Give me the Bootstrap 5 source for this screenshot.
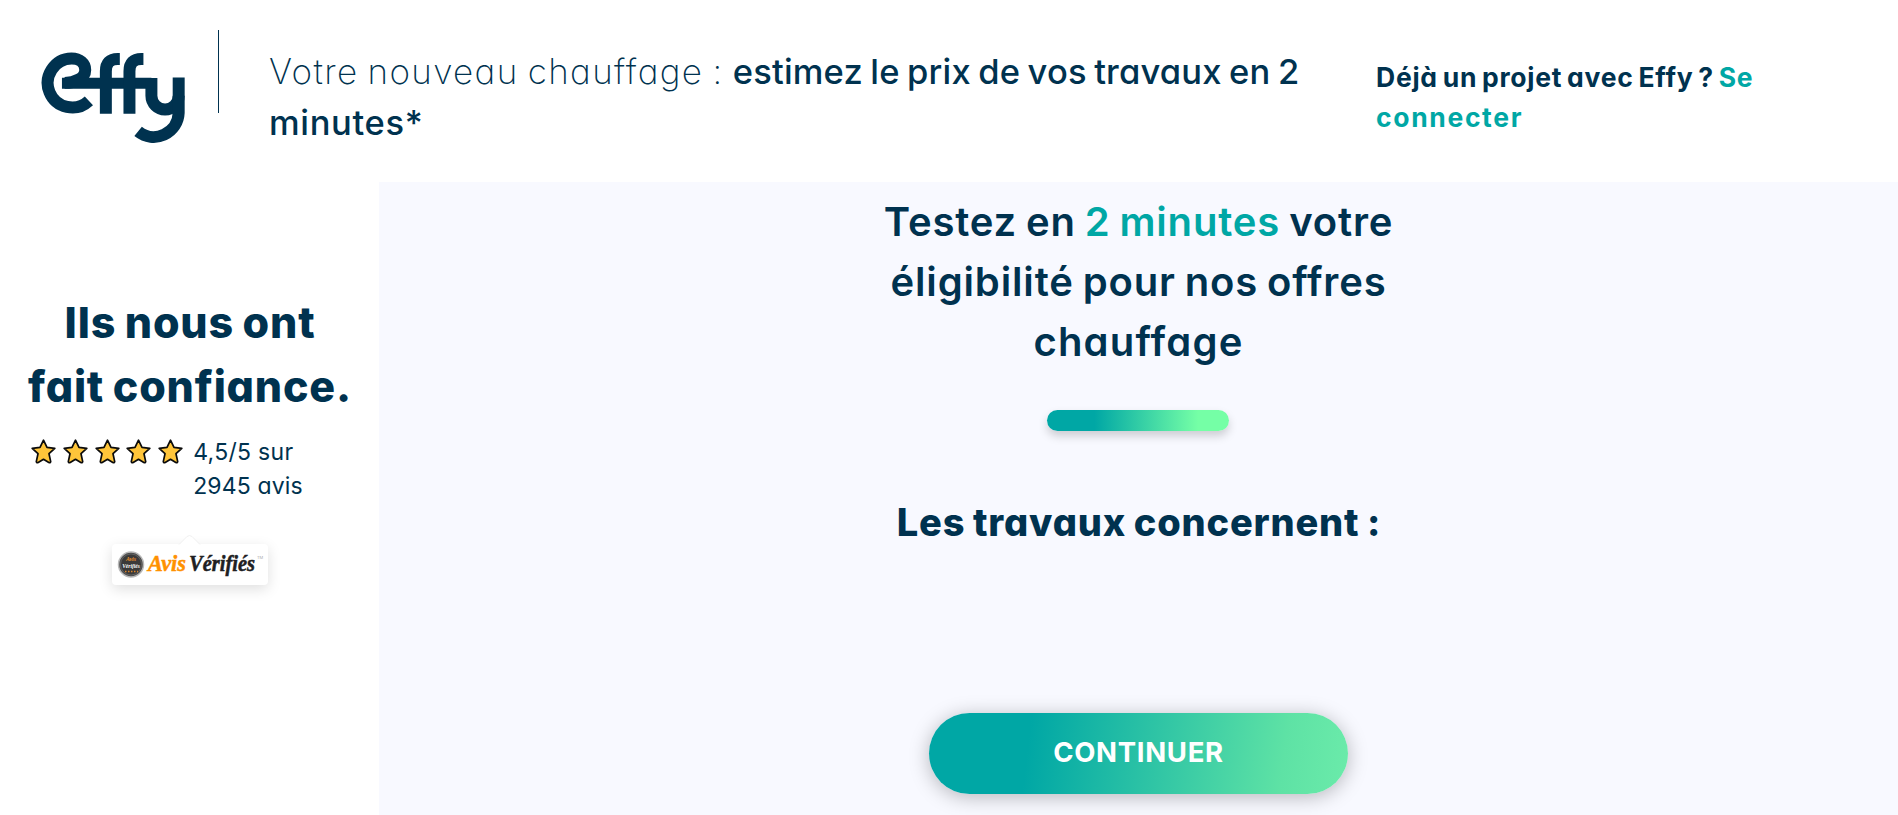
<!DOCTYPE html>
<html lang="fr">
<head>
  <meta charset="UTF-8">
  <title>Effy - Votre nouveau chauffage</title>
  <meta name="viewport" content="width=device-width, initial-scale=1">
  <link href="https://cdn.jsdelivr.net/npm/bootstrap@5.3.0/dist/css/bootstrap.min.css" rel="stylesheet">
  <style>
    body {
      font-family: Inter, "Liberation Sans", sans-serif;
      font-feature-settings: "cv11" 1;
      color: #00324f;
    }
    a, .teal { color: #00a7a5; text-decoration: none; }

    /* header */
    .site-header { height: 182px; padding-left: 41px; }
    .logo { width: 144px; height: 92px; margin-top: 51.5px; }
    .separator { width: 1px; height: 83px; margin: 30px 50px 0 33px; background: #00324f; }
    .site-title {
      width: 1060px;
      margin: 46px 0 0;
      font-size: 34.5px;
      font-weight: 500;
      line-height: 51px;
      white-space: nowrap;
      word-spacing: -2px;
    }
    .title-thin { font-size: 35px; font-weight: 200; letter-spacing: 1.35px; }
    .title-strong { letter-spacing: .19px; }
    .title-last { letter-spacing: .65px; }
    .login {
      margin: 57px 0 0 47px;
      font-size: 26.5px;
      font-weight: 700;
      line-height: 40px;
      letter-spacing: .75px;
      word-spacing: -2.2px;
    }
    .login a.wide { letter-spacing: 1.65px; }

    /* reviews column */
    .reviews { width: 379px; padding-top: 108px; }
    .reviews h2 {
      font-size: 43px;
      font-weight: 800;
      line-height: 64px;
      letter-spacing: .8px;
      word-spacing: -1.5px;
      padding-left: 1px;
      margin-bottom: 17px;
    }
    .stars { gap: 6.8px; padding: 4px 10px 0 31px; }
    .stars svg { width: 25px; height: 25px; }
    .rating p { font-size: 23px; line-height: 34px; letter-spacing: .3px; }
    .rating p + p { letter-spacing: .15px; }
    .avis-box {
      width: 156px;
      height: 41px;
      margin: 41px 0 0 112px;
      border-radius: 4px;
      box-shadow: 0 4px 14px rgba(0, 0, 0, .13);
      background: #fff;
    }
    .avis-box svg { width: 156px; height: 50px; margin-top: -9px; overflow: visible; }

    /* form */
    .simulator { background: #f8f9ff; padding-top: 10px; }
    .simulator h1 {
      font-size: 40px;
      font-weight: 600;
      line-height: 60px;
      letter-spacing: .85px;
      word-spacing: -2px;
      margin-bottom: 38px;
    }
    .simulator h1 .last { letter-spacing: 1.2px; }
    .bar {
      width: 182px;
      height: 21px;
      margin-right: 1px;
      border-radius: 11px;
      background: linear-gradient(90deg, #00a7a5 26%, #75ffa6 83%);
      box-shadow: 0 5px 10px rgba(0, 0, 0, .18);
    }
    .simulator h3 {
      font-size: 38px;
      font-weight: 800;
      line-height: 56px;
      letter-spacing: .82px;
      word-spacing: -1.5px;
      padding-left: 1px;
      margin: 63px 0 163px;
    }
    .btn-continue, .btn-continue:hover {
      width: 419px;
      height: 81px;
      border: 0;
      border-radius: 41px;
      padding: 4px 12px 6px;
      background: linear-gradient(97deg, #00a7a5 24%, #5ee2a5 84%, #6bebaa);
      box-shadow: 0 3px 20px rgba(0, 0, 0, .27);
      color: #fff;
      font-size: 27.5px;
      font-weight: 700;
      letter-spacing: .7px;
    }
  </style>
</head>
<body class="d-flex flex-column vh-100 overflow-hidden">
  <svg class="d-none">
    <symbol id="star" viewBox="0 0 25 25">
      <path d="M12.5 1.2 L16 8.4 L23.8 9.3 L18 14.7 L19.7 22.6 Q19.4 24.2 17.8 23.5 L12.5 20.3 L7.2 23.5 Q5.600 24.2 5.300 22.600 L7 14.700 L1.200 9.300 L9 8.400 Z" fill="#ffc53a" stroke="#0b0b0b" stroke-width="1.700" stroke-linejoin="round"/>
    </symbol>
  </svg>

  <header class="site-header d-flex align-items-start flex-shrink-0">
    <svg class="logo flex-shrink-0" viewBox="33 95 433 275" fill="none" stroke="#00324f" stroke-width="36">
      <path d="M177 241 A73.500 73.500 0 1 1 125 114 C150 114 166 129 166 148 C166 174 133 187 104 187"/>
      <path d="M96 188 H365" stroke-width="33"/>
      <path d="M228 280 V152 Q228 115 264 115 H270"/>
      <path d="M299 280 V152 Q299 115 335 115 H341"/>
      <path d="M365 172 V226 A41 41 0 0 0 447 226"/>
      <path d="M447 171 V277 A75 75 0 0 1 325 333"/>
    </svg>
    <div class="separator flex-shrink-0"></div>
    <p class="site-title flex-shrink-0"><span class="title-thin">Votre nouveau chauffage : </span><span class="title-strong">estimez le prix de vos travaux en 2</span><br><span class="title-last">minutes*</span></p>
    <p class="login text-nowrap">Déjà un projet avec Effy ? <a href="#">Se</a><br><a href="#" class="wide">connecter</a></p>
  </header>

  <div class="d-flex flex-grow-1">
    <aside class="reviews flex-shrink-0">
      <h2 class="text-center">Ils nous ont<br>fait confiance.</h2>
      <div class="d-flex">
        <div class="stars d-flex">
          <svg><use href="#star"/></svg>
          <svg><use href="#star"/></svg>
          <svg><use href="#star"/></svg>
          <svg><use href="#star"/></svg>
          <svg><use href="#star"/></svg>
        </div>
        <div class="rating">
          <p class="m-0">4,5/5 sur</p>
          <p class="m-0">2945 avis</p>
        </div>
      </div>
      <div class="avis-box d-flex">
        <svg class="flex-shrink-0" viewBox="0 0 156 50">
          <path d="M67 10 L75 2 Q77.500 0 80 2 L88 10 Z" fill="#fff"/>
          <path d="M67 9.500 L75 1.500 Q77.500 -.5 80 1.500 L88 9.500" fill="none" stroke="#f1f1f1"/>
          <circle cx="19" cy="29.500" r="12.500" fill="#4b4b4b" stroke="#b9b9b9" stroke-width="1.500"/>
          <circle cx="19" cy="29.500" r="10.500" fill="#3a3a3a" stroke="#777" stroke-width=".6"/>
          <g text-anchor="middle" font-family="Liberation Serif" font-style="italic" font-weight="700">
            <text x="19" y="26" font-size="6" fill="#f0912a">Avis</text>
            <text x="19" y="32.500" font-size="5.500" fill="#fff">Vérifiés</text>
          </g>
          <path d="M13 36.500 H26" stroke="#d9822b" stroke-width="1.500" stroke-dasharray="1.500 1.500"/>
          <g font-family="Liberation Serif" font-style="italic" font-weight="700" font-size="23" stroke-width=".5">
            <text x="36" y="36" fill="#ff9100" stroke="#ff9100" textLength="38" lengthAdjust="spacingAndGlyphs">Avis</text>
            <text x="77" y="36" fill="#202022" stroke="#202022" textLength="66" lengthAdjust="spacingAndGlyphs">Vérifiés</text>
          </g>
          <text x="145" y="24" font-size="4" fill="#aaa">TM</text>
        </svg>
      </div>
    </aside>

    <main class="simulator flex-grow-1 d-flex flex-column align-items-center text-center">
      <h1>Testez en <span class="teal">2 minutes</span> votre<br>éligibilité pour nos offres<br><span class="last">chauffage</span></h1>
      <div class="bar flex-shrink-0"></div>
      <h3>Les travaux concernent :</h3>
      <button type="button" class="btn btn-continue flex-shrink-0">CONTINUER</button>
    </main>
  </div>

  <script src="https://cdn.jsdelivr.net/npm/bootstrap@5.3.0/dist/js/bootstrap.bundle.min.js"></script>
</body>
</html>
